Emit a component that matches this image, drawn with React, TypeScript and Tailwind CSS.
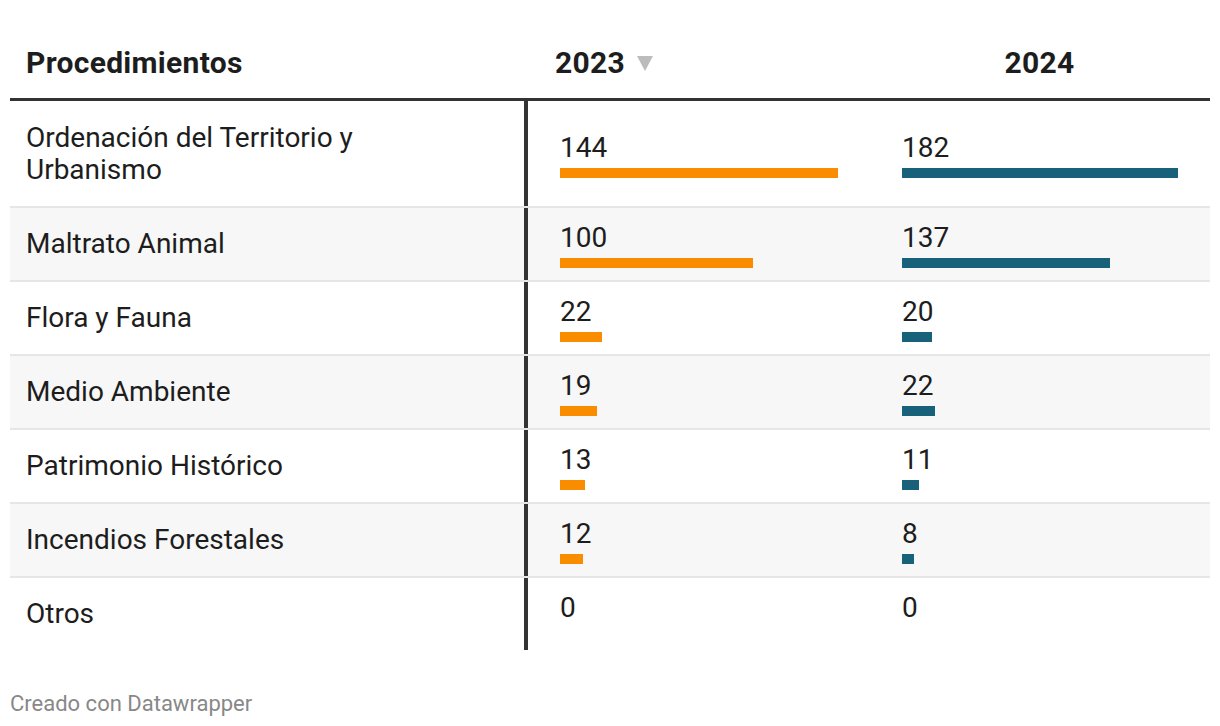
import React from "react";

type Row = { label: string; a: number; b: number; shade: boolean };

const rows: Row[] = [
  { label: "Ordenación del Territorio y Urbanismo", a: 144, b: 182, shade: false },
  { label: "Maltrato Animal", a: 100, b: 137, shade: true },
  { label: "Flora y Fauna", a: 22, b: 20, shade: false },
  { label: "Medio Ambiente", a: 19, b: 22, shade: true },
  { label: "Patrimonio Histórico", a: 13, b: 11, shade: false },
  { label: "Incendios Forestales", a: 12, b: 8, shade: true },
  { label: "Otros", a: 0, b: 0, shade: false },
];

function BarCell({ value, width, color }: { value: number; width: number; color: string }) {
  return (
    <div className="flex flex-col justify-center">
      <div className="leading-[32px] pt-[2px]">{value}</div>
      <div className="mt-[4px] h-[10px]">
        <div className={`h-[10px] ${color}`} style={{ width: `${width}px` }} />
      </div>
    </div>
  );
}

export default function App() {
  return (
    <div
      className="bg-white w-[1220px] h-[726px] px-[10px] pt-[30px] text-[#1d1d1d]"
      style={{ fontFamily: "Roboto, 'Noto Sans', sans-serif" }}
    >
      <div className="flex h-[71px] pb-[4px] items-center border-b-[3px] border-[#333333] text-[30px] tracking-[0.3px] font-bold">
        <div className="w-[514px] pl-[16px]">Procedimientos</div>
        <div className="w-[345px] pl-[31px] flex items-center">
          <span>2023</span>
          <svg className="ml-[12px] mt-[3px]" width="16" height="15" viewBox="0 0 16 15">
            <polygon points="0,0 16,0 8,15" fill="#bcbcbc" />
          </svg>
        </div>
        <div className="flex-1 text-center">2024</div>
      </div>
      {rows.map((r, i) => {
        const last = i === rows.length - 1;
        return (
          <div
            key={r.label}
            className={`flex text-[28px] ${r.shade ? "bg-[#f7f7f7]" : "bg-white"} ${
              last ? "" : "border-b-2 border-[#e6e6e6]"
            }`}
          >
            <div
              className={`w-[514px] pl-[16px] pr-[100px] leading-[32px] flex items-center ${
                i === 0 ? "pt-[21px] pb-[20px]" : "py-[20px]"
              }`}
            >
              {r.label}
            </div>
            <div className="w-[345px] border-l-4 border-[#333333] pl-[32px] flex items-center py-[12px]">
              <BarCell value={r.a} width={(r.a / 144) * 278} color="bg-[#fa8c00]" />
            </div>
            <div className="flex-1 pl-[33px] flex items-center py-[12px]">
              <BarCell value={r.b} width={(r.b / 182) * 276} color="bg-[#17617b]" />
            </div>
          </div>
        );
      })}
      <div className="mt-[42px] text-[22px] leading-[24px] text-[#888888]">Creado con Datawrapper</div>
    </div>
  );
}
